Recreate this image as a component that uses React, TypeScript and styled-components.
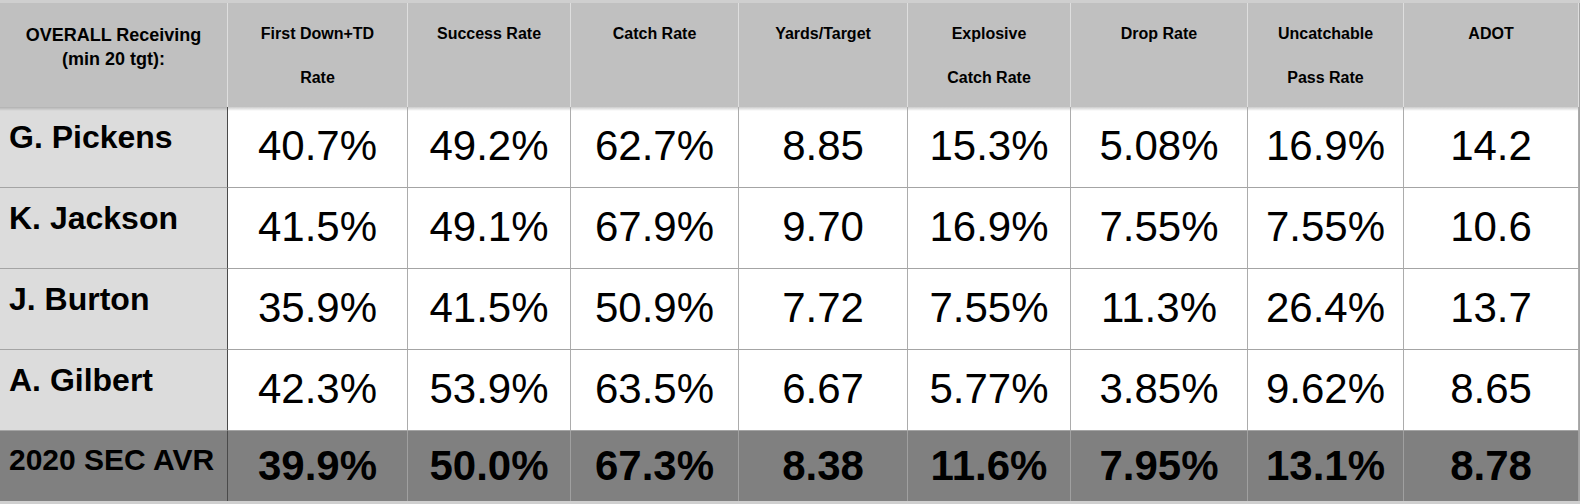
import * as React from "react";
import styled, { createGlobalStyle } from "styled-components";

type Player = {
  name: string;
  values: Array<string>;
};

const columnWidths = [228, 180, 163, 168, 169, 163, 177, 156, 175];

const headers: Array<Array<string>> = [
  ["First Down+TD", "Rate"],
  ["Success Rate"],
  ["Catch Rate"],
  ["Yards/Target"],
  ["Explosive", "Catch Rate"],
  ["Drop Rate"],
  ["Uncatchable", "Pass Rate"],
  ["ADOT"],
];

const players: Array<Player> = [
  {
    name: "G. Pickens",
    values: ["40.7%", "49.2%", "62.7%", "8.85", "15.3%", "5.08%", "16.9%", "14.2"],
  },
  {
    name: "K. Jackson",
    values: ["41.5%", "49.1%", "67.9%", "9.70", "16.9%", "7.55%", "7.55%", "10.6"],
  },
  {
    name: "J. Burton",
    values: ["35.9%", "41.5%", "50.9%", "7.72", "7.55%", "11.3%", "26.4%", "13.7"],
  },
  {
    name: "A. Gilbert",
    values: ["42.3%", "53.9%", "63.5%", "6.67", "5.77%", "3.85%", "9.62%", "8.65"],
  },
];

const average: Player = {
  name: "2020 SEC AVR",
  values: ["39.9%", "50.0%", "67.3%", "8.38", "11.6%", "7.95%", "13.1%", "8.78"],
};

const GlobalStyle = createGlobalStyle`
  html, body {
    margin: 0;
    padding: 0;
    background: #ffffff;
  }

  body {
    font-family: "Liberation Sans", Arial, Helvetica, sans-serif;
    color: #000000;
  }
`;

function App() {
  return (
    <>
      <GlobalStyle />
      <Page>
        <Table>
          <CornerCell>
            OVERALL Receiving
            <br />
            (min 20 tgt):
          </CornerCell>
          {headers.map((lines, index) => (
            <HeaderCell key={index}>
              {lines.map((line, lineIndex) => (
                <React.Fragment key={lineIndex}>
                  {lineIndex > 0 && <br />}
                  {line}
                </React.Fragment>
              ))}
            </HeaderCell>
          ))}

          {players.map((player, rowIndex) => (
            <React.Fragment key={player.name}>
              <NameCell $first={rowIndex === 0}>{player.name}</NameCell>
              {player.values.map((value, index) => (
                <ValueCell key={index} $first={rowIndex === 0}>
                  {value}
                </ValueCell>
              ))}
            </React.Fragment>
          ))}

          <AverageName>{average.name}</AverageName>
          {average.values.map((value, index) => (
            <AverageValue key={index}>{value}</AverageValue>
          ))}
        </Table>
      </Page>
    </>
  );
}

export default App;

const headerShadow = `linear-gradient(rgba(0, 0, 0, 0.2), rgba(0, 0, 0, 0) 4px)`;

const Page = styled.div`
  width: 1580px;
  height: 504px;
  padding-top: 3px;
  box-sizing: border-box;
  background: #cfcfcf;
  overflow: hidden;
`;

const Table = styled.div`
  display: grid;
  grid-template-columns: ${columnWidths.map((w) => `${w}px`).join(" ")};
  grid-template-rows: 104px repeat(4, 81px) 70px;
  width: 1580px;
  border-right: 1px solid #a4a4a4;
  box-sizing: border-box;
`;

const HeaderCell = styled.div`
  background: #c0c0c0;
  border-right: 1px solid #dedede;
  box-sizing: border-box;
  padding-top: 9px;
  text-align: center;
  font-size: 16px;
  font-weight: 700;
  line-height: 44px;
`;

const CornerCell = styled(HeaderCell)`
  padding-top: 20px;
  font-size: 18px;
  line-height: 24px;
`;

const NameCell = styled.div<{ $first?: boolean }>`
  background-color: #dcdcdc;
  background-image: ${(p) => (p.$first ? headerShadow : "none")};
  border-right: 1px solid #4a4a4a;
  border-bottom: 1px solid #a4a4a4;
  box-sizing: border-box;
  padding: 10px 0 0 9px;
  font-size: 32px;
  font-weight: 700;
  line-height: 40px;
  white-space: nowrap;
`;

const ValueCell = styled.div<{ $first?: boolean }>`
  display: flex;
  align-items: center;
  justify-content: center;
  background-color: #ffffff;
  background-image: ${(p) => (p.$first ? headerShadow : "none")};
  border-right: 1px solid #acacac;
  border-bottom: 1px solid #a4a4a4;
  box-sizing: border-box;
  padding-bottom: 3px;
  font-size: 42px;
  font-weight: 400;
  white-space: nowrap;
`;

const AverageName = styled.div`
  display: flex;
  align-items: center;
  background: #808080;
  border-right: 1px solid #4a4a4a;
  box-sizing: border-box;
  padding: 0 0 12px 9px;
  font-size: 30px;
  font-weight: 700;
  white-space: nowrap;
`;

const AverageValue = styled.div`
  display: flex;
  align-items: center;
  justify-content: center;
  background: #808080;
  border-right: 1px solid #a0a0a0;
  box-sizing: border-box;
  font-size: 42px;
  font-weight: 700;
  white-space: nowrap;
`;
